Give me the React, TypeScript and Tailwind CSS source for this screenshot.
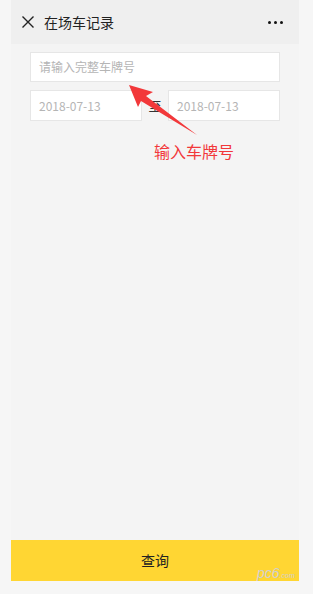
import React from "react";

export default function App() {
  const font = { fontFamily: '"Noto Sans CJK SC", "Noto Sans", sans-serif' };
  return (
    <div className="relative w-[313px] h-[594px] bg-[#f6f6f6] pl-[11px] pr-[14px] pb-[13px] flex" style={font}>
      <div className="flex-1 flex flex-col bg-[#f4f4f4]">
        <div className="h-[44px] bg-[#efefef] flex items-center pl-[10px] pr-[16px]">
          <svg width="14" height="14" viewBox="0 0 14 14" className="mr-[9px]">
            <path d="M1.5 1.5 L12.5 12.5 M12.5 1.5 L1.5 12.5" stroke="#222" strokeWidth="1.4" />
          </svg>
          <span className="text-[14px] text-[#222] leading-none">在场车记录</span>
          <div className="ml-auto flex gap-[3px]">
            <span className="w-[3px] h-[3px] rounded-full bg-[#111]" />
            <span className="w-[3px] h-[3px] rounded-full bg-[#111]" />
            <span className="w-[3px] h-[3px] rounded-full bg-[#111]" />
          </div>
        </div>
        <div className="px-[19px] pt-[8px] flex flex-col gap-[8px]">
          <div className="h-[30px] bg-white border border-[#e6e6e6] flex items-center px-[8px] text-[12px] text-[#b5b5b5]">
            请输入完整车牌号
          </div>
          <div className="flex items-center">
            <div className="w-[112px] h-[31px] bg-white border border-[#e6e6e6] flex items-center px-[8px] text-[12px] text-[#b5b5b5]">
              2018-07-13
            </div>
            <span className="flex-1 text-center text-[13px] text-[#333]">至</span>
            <div className="w-[112px] h-[31px] bg-white border border-[#e6e6e6] flex items-center px-[8px] text-[12px] text-[#b5b5b5]">
              2018-07-13
            </div>
          </div>
        </div>
        <div className="flex-1" />
        <div className="h-[41px] bg-[#ffd633] flex items-center justify-center text-[14px] text-[#222]">
          查询
        </div>
      </div>
      <svg className="absolute left-0 top-0" width="313" height="594" viewBox="0 0 313 594">
        <polygon points="129,85 153,92 146,96 197,135 141,101 138,107" fill="#f2383a" />
      </svg>
      <span className="absolute left-[154px] top-[141px] text-[16px] leading-[20px] text-[#f2383a]">输入车牌号</span>
      <span className="absolute left-[257px] top-[566px] text-[14px] leading-none text-[#d0d0d0] italic" style={{ fontFamily: '"Liberation Sans", sans-serif' }}>pc6<span className="text-[7px]">.com</span></span>
    </div>
  );
}
